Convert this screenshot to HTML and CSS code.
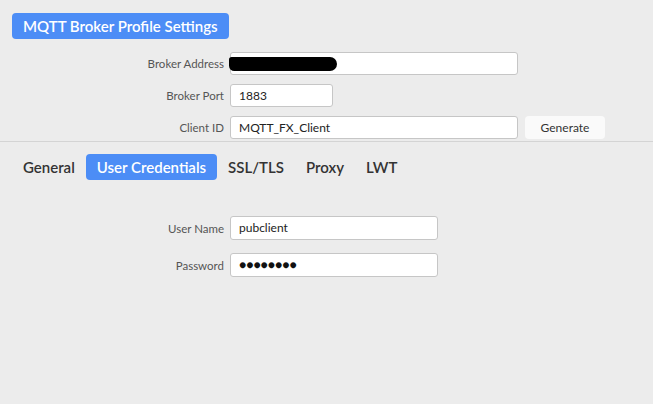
FILE: index.html
```html
<!DOCTYPE html>
<html>
<head>
<meta charset="utf-8">
<link rel="stylesheet" href="styles.css">
</head>
<body>
<div class="page">
  <div class="top">
    <div class="title">MQTT Broker Profile Settings</div>
    <div class="form">
      <div class="row">
        <span class="label">Broker Address</span>
        <div class="field wide redacted-field"><span class="redact"></span></div>
      </div>
      <div class="row">
        <span class="label">Broker Port</span>
        <div class="field port">1883</div>
      </div>
      <div class="row">
        <span class="label">Client ID</span>
        <div class="field wide">MQTT_FX_Client</div>
        <div class="btn">Generate</div>
      </div>
    </div>
  </div>
  <div class="tabs">
    <div class="tab">General</div>
    <div class="tab active">User Credentials</div>
    <div class="tab">SSL/TLS</div>
    <div class="tab">Proxy</div>
    <div class="tab">LWT</div>
  </div>
  <div class="creds">
    <div class="row">
      <span class="label">User Name</span>
      <div class="field mid">pubclient</div>
    </div>
    <div class="row">
      <span class="label">Password</span>
      <div class="field mid dots">&#9679;&#9679;&#9679;&#9679;&#9679;&#9679;&#9679;&#9679;</div>
    </div>
  </div>
</div>
</body>
</html>
```

FILE: styles.css
```css
html, body {
  margin: 0;
  padding: 0;
  background: #ececec;
  font-family: Lato, "Open Sans", sans-serif;
}
.page {
  width: 653px;
  height: 404px;
  background: #ececec;
}
.top {
  padding: 13px 0 2px 0;
  border-bottom: 1px solid #d4d4d4;
}
.title {
  display: inline-block;
  margin-left: 12px;
  height: 26px;
  line-height: 26px;
  padding: 0 11px;
  background: #4c8df6;
  color: #fff;
  font-size: 15px;
  font-weight: 600;
  border-radius: 4px;
}
.form {
  margin-top: 13px;
  display: flex;
  flex-direction: column;
  gap: 9px;
}
.row {
  display: flex;
  align-items: center;
  gap: 6px;
}
.label {
  width: 224px;
  text-align: right;
  font-size: 11.5px;
  color: #555;
}
.field {
  box-sizing: border-box;
  height: 23px;
  line-height: 21px;
  background: #fff;
  border: 1px solid #c6c6c6;
  border-radius: 3px;
  padding: 0 8px;
  font-size: 12px;
  color: #222;
  position: relative;
}
.wide { width: 288px; }
.port { width: 103px; }
.mid { width: 208px; height: 24px; line-height: 22px; }
.btn {
  margin-left: 1px;
  box-sizing: border-box;
  width: 80px;
  height: 23px;
  line-height: 23px;
  text-align: center;
  background: #fafafa;
  border-radius: 4px;
  font-size: 12px;
  color: #333;
}
.redact {
  position: absolute;
  left: -2px;
  top: 4px;
  width: 108px;
  height: 14px;
  background: #000;
  border-radius: 3px 8px 8px 6px;
}
.tabs {
  display: flex;
  margin: 12px 0 0 12px;
}
.tab {
  height: 26px;
  line-height: 26px;
  padding: 0 11px;
  font-size: 15px;
  font-weight: 600;
  color: #333;
  border-radius: 4px;
}
.tab.active {
  background: #4c8df6;
  color: #fff;
}
.creds {
  margin-top: 36px;
  display: flex;
  flex-direction: column;
  gap: 13px;
}
.dots {
  font-size: 12px;
  color: #111;
}
```
